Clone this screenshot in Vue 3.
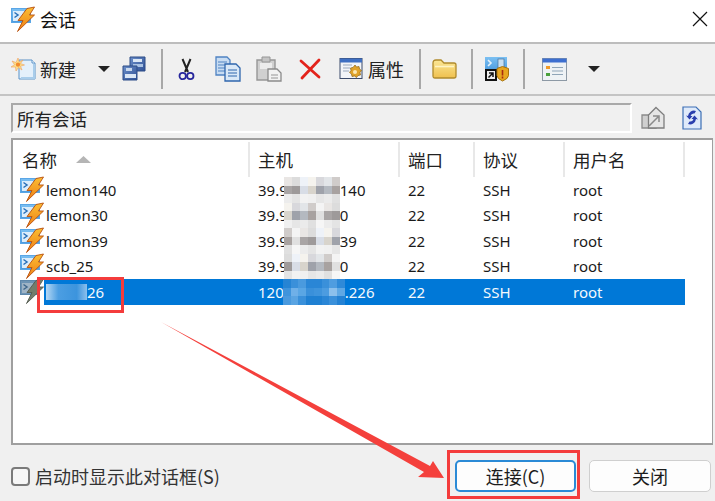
<script setup>
const columns = [
  { label: '名称', width: 237, sort: true },
  { label: '主机', width: 150 },
  { label: '端口', width: 75 },
  { label: '协议', width: 90 },
  { label: '用户名', width: 120 },
]
const greyBands = [
  ['#e9e6e4', '#dcdcdc', '#eef2f8', '#f5f3ee', '#d8d8dc', '#e2e5e8', '#d0ccca', '#f4f4f4'],
  ['#a9a5a5', '#9e9a9a', '#d8dde6', '#d8d4cc', '#9fa2aa', '#b4b9c0', '#a8a2a0', '#e0e0e0'],
  ['#ececec', '#e4e4e4', '#f2f2f2', '#f0f0f0', '#e6e6e6', '#ebebeb', '#e0e0e0', '#f6f6f6'],
]
const blueBands = [
  ['#2a86d6', '#3a90da', '#4f9de0', '#2f8ad8', '#2684d4', '#3a90da', '#4a9ade', '#2a86d6'],
  ['#3f94dc', '#4c9ce0', '#8cc0ec', '#5fa8e4', '#3f94dc', '#6fb0e8', '#5aa6e4', '#3a90da'],
  ['#1f80d2', '#2a86d6', '#3a90da', '#2482d4', '#4a9ade', '#5aa4e2', '#3a90da', '#1f80d2'],
]
const sessions = [
  { name: 'lemon140', hostA: '39.9', hostB: '140', gap: 56, selected: false },
  { name: 'lemon30', hostA: '39.9', hostB: '0', gap: 56, selected: false },
  { name: 'lemon39', hostA: '39.9', hostB: '39', gap: 56, selected: false },
  { name: 'scb_25', hostA: '39.9', hostB: '0', gap: 56, selected: false },
  { name: '26', hostA: '120', hostB: '.226', gap: 62, selected: true },
]
function mosaic(row, selected) {
  const bands = selected ? blueBands : greyBands
  const cols = selected ? 8 : 7
  const cells = []
  bands.forEach((band) => {
    for (let c = 0; c < cols; c++) cells.push({ background: band[(c + row * 3) % 8] })
  })
  return cells
}
</script>

<template>
  <div class="dialog">
    <svg width="0" height="0" class="defs">
      <defs>
        <linearGradient id="win-blue" x1="0" y1="0" x2="0" y2="1">
          <stop offset="0" stop-color="#7cc0f2" />
          <stop offset="1" stop-color="#4b9be0" />
        </linearGradient>
        <linearGradient id="bolt-fill" x1="0" y1="0" x2="0" y2="1">
          <stop offset="0" stop-color="#fbbf34" />
          <stop offset="1" stop-color="#ee7d14" />
        </linearGradient>
        <linearGradient id="folder-fill" x1="0" y1="0" x2="0" y2="1">
          <stop offset="0" stop-color="#fbe796" />
          <stop offset="1" stop-color="#efc04e" />
        </linearGradient>
        <linearGradient id="mgr-fill" x1="0" y1="0" x2="1" y2="1">
          <stop offset="0" stop-color="#6c8fc9" />
          <stop offset="1" stop-color="#2f5196" />
        </linearGradient>
        <symbol id="bolt-window" viewBox="0 0 26 26">
          <rect x="1.500" y="2.500" width="19" height="14" fill="url(#win-blue)" stroke="#5aa6e6" />
          <rect x="3" y="5" width="11" height="10" fill="#dcedfb" />
          <path d="M4.500 6.500l3.500 2.500-3.500 2.500" fill="none" stroke="#2a70b8" stroke-width="1.500" />
          <path d="M17 2.500L24.500 1 19.500 9H24.500L7.500 25.500 13 14.500H8z" fill="url(#bolt-fill)" stroke="#b9500f" stroke-width=".9" stroke-linejoin="round" />
        </symbol>
        <symbol id="bolt-window-dim" viewBox="0 0 26 26">
          <rect x="1.500" y="2.500" width="19" height="14" fill="#6c93b4" stroke="#5d87aa" />
          <rect x="3" y="5" width="11" height="10" fill="#9fb4c6" />
          <path d="M4.500 6.500l3.500 2.500-3.500 2.500" fill="none" stroke="#40688c" stroke-width="1.500" />
          <path d="M17 2.500L24.500 1 19.500 9H24.500L7.500 25.500 13 14.500H8z" fill="#737d6c" stroke="#555b50" stroke-width=".9" stroke-linejoin="round" />
        </symbol>
      </defs>
    </svg>

    <header class="titlebar">
      <svg class="app-icon" width="26" height="26" viewBox="0 0 26 26"><use href="#bolt-window" /></svg>
      <span class="title">会话</span>
      <svg class="close-x" width="16" height="16" viewBox="0 0 16 16"><path d="M1 1l14 14M15 1L1 15" stroke="#111" stroke-width="1.200" fill="none" /></svg>
    </header>

    <nav class="toolbar">
      <svg class="new-icon" width="26" height="24" viewBox="0 0 26 24">
        <path d="M8 3h13l3 3v16H8z" fill="#e4f0fb" stroke="#5b93c9" />
        <path d="M21 3v3h3" fill="#fff" stroke="#5b93c9" />
        <path d="M10 21h13V7" fill="none" stroke="#a9cdeb" stroke-width="2" />
        <path d="M7 1l1.200 4L12 3 9.500 6.500 13.500 8 9.500 9.200 11 13 7.500 10.500 5 14l-.5-4L0 10l3.500-2.300L1 4l4 1.500z" fill="#fbe08a" stroke="#f0a060" stroke-width=".6" />
        <circle cx="7" cy="7.600" r="2.200" fill="#f28a2e" />
      </svg>
      <span class="tool-label new-label">新建</span>
      <i class="caret new-caret"></i>
      <svg class="session-mgr" width="26" height="26" viewBox="0 0 26 26">
        <path d="M9 1h15v14H9z" fill="url(#mgr-fill)" stroke="#2d4d87" />
        <path d="M12 3h9v3h-9z" fill="#dbe7f5" />
        <path d="M12 8h10v3H12z" fill="#a9c2e3" />
        <path d="M2 10h14v14H2z" fill="url(#mgr-fill)" stroke="#2d4d87" />
        <path d="M5 12h6v3H5z" fill="#c9d9ee" />
        <path d="M4 18h11v4H4z" fill="#dbe7f5" />
      </svg>
      <span class="sep sep-a"></span>

      <svg class="scissors" width="17" height="23" viewBox="0 0 17 23">
        <path d="M4.500 1l5.500 13M12.500 1L7 14" stroke="#222" stroke-width="2" fill="none" />
        <circle cx="4.700" cy="18" r="3.200" fill="none" stroke="#26269c" stroke-width="1.800" />
        <circle cx="12.300" cy="18" r="3.200" fill="none" stroke="#26269c" stroke-width="1.800" />
      </svg>
      <svg class="copy" width="26" height="26" viewBox="0 0 26 26">
        <path d="M1 1h11l3 3v15H1z" fill="#c8dcf2" stroke="#4f83c2" stroke-width="1.300" />
        <path d="M3 6h9M3 9h9M3 12h9M3 15h9" stroke="#4f83c2" />
        <path d="M10 8h11l4 4v13H10z" fill="#d9e8f7" stroke="#2f66ad" stroke-width="1.300" />
        <path d="M13 14h9M13 17h9M13 20h9" stroke="#2f66ad" />
      </svg>
      <svg class="paste" width="26" height="26" viewBox="0 0 26 26">
        <path d="M1 4h18v20H1z" fill="#d0d0d0" stroke="#969696" stroke-width="1.400" />
        <path d="M6 1h8v5H6z" fill="#c4c4c4" stroke="#969696" />
        <path d="M4 7h12v6H4z" fill="#ececec" />
        <path d="M12 13h9l4 4v8H12z" fill="#f2f2f2" stroke="#8a8a8a" stroke-width="1.300" />
        <path d="M15 19h7M15 22h7" stroke="#969696" />
      </svg>
      <svg class="delete" width="22" height="22" viewBox="0 0 22 22">
        <path d="M2 3l18 16M20 2L3 20" stroke="#e3231b" stroke-width="2.800" stroke-linecap="round" fill="none" />
      </svg>
      <svg class="props" width="24" height="24" viewBox="0 0 24 24">
        <rect x="1" y="1.500" width="22" height="20" fill="#f2f4f8" stroke="#3b4a6b" />
        <rect x="1" y="1.500" width="22" height="4" fill="#3e6fc2" />
        <path d="M4 8h9M4 11h7M4 14h6" stroke="#9aa8bd" />
        <path d="M16 8l1.500 2 2.500-.5.500 2.500 2 1.500-1.500 2 .5 2.500-2.500.5-1.500 2-2-1.500-2.500.5-.5-2.500-2-1.500 1.500-2-.5-2.500 2.500-.5z" fill="#e0a32b" stroke="#8e6412" stroke-width=".7" />
        <circle cx="16" cy="15" r="2" fill="#fbe9b8" />
      </svg>
      <span class="tool-label props-label">属性</span>
      <span class="sep sep-b"></span>

      <svg class="folder" width="25" height="22" viewBox="0 0 25 22">
        <path d="M1 5q0-3 3-3h5l3 3h10q2 0 2 2v11q0 2-2 2H3q-2 0-2-2z" fill="url(#folder-fill)" stroke="#b08a2c" stroke-width="1.300" />
        <path d="M3 8.500h19" stroke="#fff4c4" stroke-width="1.600" />
      </svg>
      <span class="sep sep-c"></span>

      <svg class="lock" width="25" height="26" viewBox="0 0 25 26">
        <rect x="1" y="1" width="22" height="14" fill="url(#win-blue)" />
        <path d="M4 4l3 3-3 3" stroke="#e6f2fb" stroke-width="1.600" fill="none" />
        <rect x="14" y="3" width="6" height="9" fill="#c8e0f3" stroke="#47709a" stroke-width=".7" />
        <rect x="1" y="13" width="12" height="12" fill="#111" />
        <rect x="3" y="15" width="8" height="8" fill="#eee" />
        <path d="M4.500 21.500l4-4M5 17h4v4" stroke="#111" stroke-width="1.500" fill="none" />
        <path d="M13 12.500l5.500-2 6 2v7q0 3-6 5.500-5.500-2.500-5.500-5.500z" fill="#e8a620" stroke="#a8740e" />
        <path d="M18.500 14v5.500M18.500 20.500v2" stroke="#a82a12" stroke-width="1.600" />
      </svg>
      <span class="sep sep-d"></span>

      <svg class="view" width="25" height="23" viewBox="0 0 25 23">
        <rect x=".5" y=".5" width="24" height="22" fill="#eef2f5" stroke="#8d99a5" />
        <rect x=".5" y=".5" width="24" height="4" fill="#3d6fd0" />
        <rect x="4" y="8" width="4" height="3" fill="#f09a2a" />
        <rect x="4" y="15" width="4" height="3" fill="#4aa03c" />
        <path d="M10 9.500h11M10 13h11M10 16.500h11" stroke="#8fa5b8" />
      </svg>
      <i class="caret view-caret"></i>
    </nav>

    <section class="pathbar">
      <div class="path">所有会话</div>
      <svg class="up" width="26" height="24" viewBox="0 0 26 24">
        <path d="M2 9h14v13H2z" fill="#cfcfcf" stroke="#8a8a8a" stroke-width="1.300" />
        <path d="M16 1.500l8 7.500v13H8.500V9z" fill="#e6e6e6" stroke="#7e7e7e" stroke-width="1.300" />
        <path d="M9 20l9-9M13 10h6v6" stroke="#8a8a8a" stroke-width="1.500" fill="none" />
      </svg>
      <svg class="refresh" width="20" height="24" viewBox="0 0 20 24">
        <path d="M1 1h13l5 5v17H1z" fill="#dfeafa" stroke="#3c6fb5" stroke-width="1.200" />
        <path d="M14 5a6 6 0 0 0-8 5l-2-.5 3.500 4 3-3.500-2 0a3.500 3.500 0 0 1 4-2.500z" fill="#2a3fae" />
        <path d="M6 18a6 6 0 0 0 8-5l2 .5-3.500-4-3 3.500 2 0a3.500 3.500 0 0 1-4 2.500z" fill="#2a3fae" />
      </svg>
    </section>

    <section class="list">
      <div class="list-head">
        <div v-for="col in columns" :key="col.label" class="head-cell" :style="{ width: col.width + 'px' }">
          {{ col.label }}
          <svg v-if="col.sort" class="sort" width="15" height="7" viewBox="0 0 15 7"><path d="M7.500 0L15 7H0z" fill="#b5b5b5" /></svg>
        </div>
      </div>
      <div class="rows">
        <div v-for="(s, r) in sessions" :key="r" class="row" :class="{ selected: s.selected }">
          <svg class="row-icon" width="26" height="26" viewBox="0 0 26 26"><use :href="s.selected ? '#bolt-window-dim' : '#bolt-window'" /></svg>
          <div class="cell name">
            <span v-if="s.selected" class="name-blur"></span>{{ s.name }}
          </div>
          <div class="cell host">
            <span>{{ s.hostA }}</span>
            <span class="mosaic" :class="{ wide: s.selected }" :style="{ width: s.gap + 'px' }">
              <i v-for="(m, i) in mosaic(r, s.selected)" :key="i" :style="m"></i>
            </span>
            <span>{{ s.hostB }}</span>
          </div>
          <div class="cell port">22</div>
          <div class="cell proto">SSH</div>
          <div class="cell user">root</div>
        </div>
      </div>
    </section>

    <footer class="footer">
      <label class="startup">
        <span class="check"></span>
        <span>启动时显示此对话框(S)</span>
      </label>
      <button class="btn primary">连接(C)</button>
      <button class="btn">关闭</button>
    </footer>

    <div class="mark mark-name"></div>
    <div class="mark mark-btn"></div>
    <svg class="arrow" width="715" height="501" viewBox="0 0 715 501">
      <path d="M161 322L430 466l3-5 11 17-26-1 6-5z" fill="#f4403c" />
    </svg>
  </div>
</template>

<style>
html, body { margin: 0; background: #f0f0f0; }
</style>

<style scoped>
.dialog {
  position: relative;
  width: 715px;
  height: 501px;
  overflow: hidden;
  background: #f0f0f0;
  font-family: "Noto Sans CJK SC", "Noto Sans", sans-serif;
  color: #222;
  font-size: 17.500px;
}
.defs { position: absolute; }
.titlebar {
  height: 38px;
  padding-bottom: 4px;
  background: #fff;
  border-bottom: 2px solid #bdbdbd;
  display: flex;
  align-items: center;
}
.app-icon { margin-left: 10px; }
.title { margin-left: 4px; font-size: 18px; color: #111; line-height: 1; }
.close-x { margin-left: auto; margin-right: 7px; }

.toolbar {
  height: 50px;
  display: flex;
  align-items: center;
  border-bottom: 2px solid #c4c4c4;
  padding-left: 11px;
}
.tool-label { font-size: 18px; line-height: 1; color: #222; }
.new-label { margin-left: 3px; }
.caret {
  width: 0; height: 0;
  border-left: 6px solid transparent;
  border-right: 6px solid transparent;
  border-top: 6px solid #222;
}
.new-caret { margin-left: 22px; }
.session-mgr { margin-left: 11px; }
.sep { width: 2px; height: 40px; background: #a8a8a8; }
.sep-a { margin-left: 14px; }
.scissors { margin-left: 15px; }
.copy { margin-left: 20px; }
.paste { margin-left: 15px; }
.delete { margin-left: 17px; }
.props { margin-left: 18px; }
.props-label { margin-left: 5px; }
.sep-b { margin-left: 15px; }
.folder { margin-left: 11px; }
.sep-c { margin-left: 14px; }
.lock { margin-left: 11px; }
.sep-d { margin-left: 14px; }
.view { margin-left: 17px; }
.view-caret { margin-left: 21px; }

.pathbar {
  height: 30px;
  margin-top: 7px;
  padding-left: 11px;
  display: flex;
  align-items: center;
}
.path {
  width: 613px;
  height: 26px;
  border-top: 2px solid #a9a9a9;
  border-left: 2px solid #a9a9a9;
  border-right: 2px solid #fff;
  border-bottom: 2px solid #fff;
  padding-left: 4px;
  line-height: 27px;
}
.up { margin-left: 8px; }
.refresh { margin-left: 16px; }

.list {
  margin: 5px 2px 0 11px;
  height: 307px;
  box-sizing: border-box;
  background: #fff;
  border: 2px solid #9f9f9f;
  border-right-width: 1px;
}
.list-head { display: flex; height: 37px; padding-top: 2px; box-sizing: border-box; }
.head-cell {
  box-sizing: border-box;
  padding-left: 8px;
  line-height: 35px;
  border-right: 2px solid #e8e8e8;
  position: relative;
  color: #222;
}
.head-cell:first-child { padding-left: 9px; }
.sort { position: absolute; left: 63px; top: 14px; }

.row {
  height: 25.500px;
  display: flex;
  align-items: center;
  position: relative;
  font-family: "Noto Sans", sans-serif;
  font-size: 15px;
  color: #1a1a1a;
}
.row-icon { position: absolute; left: 6px; top: -1px; z-index: 1; }
.cell { height: 100%; display: flex; align-items: center; white-space: nowrap; box-sizing: border-box; }
.name { width: 206px; margin-left: 31px; padding-left: 2px; }
.host { width: 150px; padding-left: 8px; }
.port { width: 75px; padding-left: 8px; }
.proto { width: 90px; padding-left: 8px; }
.user { width: 120px; padding-left: 8px; }
.selected .cell { background: #0078d7; color: #f4f9fd; }
.name-blur {
  display: inline-block;
  width: 41px;
  height: 16px;
  background: linear-gradient(90deg, #b5d8f4, #4c9ee2 30%, #3c94dd 75%, #8dc0ec);
}
.mosaic {
  display: inline-grid;
  grid-template-columns: repeat(7, 1fr);
  grid-template-rows: repeat(3, 1fr);
  height: 100%;
  margin-left: -4px;
  flex: none;
  filter: blur(.5px);
}
.mosaic.wide { grid-template-columns: repeat(8, 1fr); margin-left: -1px; }
.mosaic i { display: block; }

.footer {
  display: flex;
  align-items: center;
  gap: 13px;
  margin-top: 15px;
  padding-left: 11px;
  height: 32px;
}
.startup { display: flex; align-items: center; width: 431px; flex: none; font-size: 18px; color: #333; white-space: nowrap; }
.check {
  width: 15px; height: 15px;
  border: 2px solid #7a7a7a;
  border-radius: 4px;
  background: #f6f6f6;
  margin-right: 5px;
  flex: none;
}
.btn {
  width: 122px;
  height: 32px;
  padding: 0;
  flex: none;
  box-sizing: border-box;
  background: #fdfdfd;
  border: 1px solid #cfcfcf;
  border-radius: 5px;
  font-family: inherit;
  font-size: 18px;
  color: #1c1c1c;
}
.btn.primary { width: 121px; border: 2px solid #2a8ad6; }

.mark { position: absolute; border: 3px solid #f43c3c; box-sizing: border-box; pointer-events: none; }
.mark-name { left: 37px; top: 277px; width: 87px; height: 36px; z-index: 2; }
.mark-btn { left: 447px; top: 450px; width: 133px; height: 49px; }
.arrow { position: absolute; left: 0; top: 0; pointer-events: none; }
</style>
